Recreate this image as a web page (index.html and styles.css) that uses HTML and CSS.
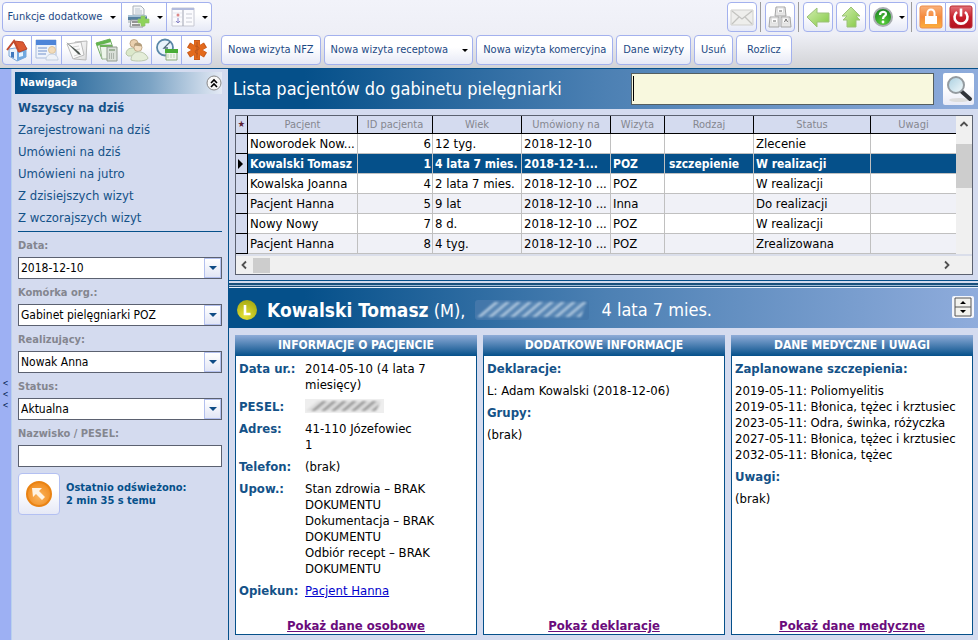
FILE: index.html
```html
<!DOCTYPE html>
<html lang="pl">
<head>
<meta charset="utf-8">
<title>Lista pacjentów do gabinetu pielęgniarki</title>
<link rel="stylesheet" href="styles.css">
</head>
<body>
<svg class="defs" width="0" height="0" aria-hidden="true">
  <defs>
    <linearGradient id="green" x1="0" y1="0" x2="1" y2="1"><stop offset="0" stop-color="#d3eeb0"/><stop offset="1" stop-color="#82c843"/></linearGradient>
    <linearGradient id="orange" x1="0" y1="0" x2="0" y2="1"><stop offset="0" stop-color="#f9b27c"/><stop offset=".5" stop-color="#f58a3c"/><stop offset="1" stop-color="#fbb03c"/></linearGradient>
    <linearGradient id="red" x1="0" y1="0" x2="0" y2="1"><stop offset="0" stop-color="#e2747a"/><stop offset=".5" stop-color="#c8202c"/><stop offset="1" stop-color="#b3121f"/></linearGradient>
    <radialGradient id="help" cx=".5" cy=".8" r=".8"><stop offset="0" stop-color="#5cd03c"/><stop offset="1" stop-color="#17801f"/></radialGradient>
    <radialGradient id="lime" cx=".4" cy=".8" r=".8"><stop offset="0" stop-color="#e6e23a"/><stop offset="1" stop-color="#a8ab12"/></radialGradient>
    <radialGradient id="amber" cx=".5" cy=".6" r=".6"><stop offset="0" stop-color="#fbb55e"/><stop offset="1" stop-color="#f08a1c"/></radialGradient>
    <linearGradient id="paper" x1="0" y1="0" x2="1" y2="1"><stop offset="0" stop-color="#fff"/><stop offset="1" stop-color="#dcdcdc"/></linearGradient>
    <linearGradient id="lens" x1="0" y1="0" x2="1" y2="1"><stop offset="0" stop-color="#a9cfe0"/><stop offset="1" stop-color="#f4fafc"/></linearGradient>
    <filter id="soft"><feGaussianBlur stdDeviation="1"/></filter>
    <pattern id="scratch-light" width="11" height="20" patternUnits="userSpaceOnUse" patternTransform="skewX(-50)">
      <rect width="4" height="20" fill="#a9c3dc"/><rect x="4" width="2" height="20" fill="#6f98c0"/><rect x="8" width="1" height="20" fill="#7fa4c8"/>
    </pattern>
    <pattern id="scratch-dark" width="10" height="20" patternUnits="userSpaceOnUse" patternTransform="skewX(-50)">
      <rect width="4" height="20" fill="#969696"/><rect x="4" width="2" height="20" fill="#cfcfcf"/><rect x="7" width="1" height="20" fill="#c2c2c2"/>
    </pattern>
  </defs>
</svg>

<header class="toolbars">
  <div class="bar">
    <div class="group">
      <button class="tool wide">Funkcje dodatkowe <i class="caret"></i></button>
      <button class="tool drop" aria-label="Drukuj">
        <svg width="24" height="24" viewBox="0 0 24 24"><path d="M7 10V1h8l3 3v6z" fill="#f4f6f8" stroke="#a8b0b8"/><path d="M9 4h5M9 6h7M9 8h7" stroke="#b9c4cf"/><path d="M2 10h18l1 2v4H2z" fill="#56809f"/><path d="M2 10h18v2H2z" fill="#a9c3d6"/><path d="M2 15h19v3H2z" fill="#c8cfd4"/><path d="M5 15h12v7H4z" fill="#f3f3f3" stroke="#8d9499"/><path d="M6 17h8M6 20h8" stroke="#777" stroke-width="1.500"/><path d="M15 11h4v3h4v4h-4v3h-4v-3h-3v-4h3z" fill="#8ed35b" stroke="#8fc46c" stroke-width=".7"/></svg>
        <i class="caret"></i></button>
      <button class="tool drop" aria-label="Widok">
        <svg width="24" height="24" viewBox="0 0 24 24"><path d="M1 3h22v18H1z" fill="#fbfbfe" stroke="#c6c8d3"/><path d="M1 3h22v2H1z" fill="#b2bbdc"/><path d="M12 5v16" stroke="#9fa3b1"/><path d="M2 8h9M2 12h9M2 17h9" stroke="#e4e5ee"/><circle cx="7" cy="10" r="1.500" fill="#d88"/><path d="M7 13v5M5 16l2 2 2-2" stroke="#8a86c8" fill="none"/><path d="M15 9h6M15 13h6M15 17h6" stroke="#c9cbd4"/></svg>
        <i class="caret"></i></button>
    </div>
    <div class="right">
      <button class="tool single" aria-label="Wiadomości"><svg width="24" height="24" viewBox="0 0 24 24"><path d="M1 5h22v15H1z" fill="#eeeeec" stroke="#d0d0cd"/><path d="M2 6l10 8L22 6M2 19l7-7M22 19l-7-7" fill="none" stroke="#c3c3c0" stroke-width="1.300"/></svg></button>
      <span class="sep"></span>
      <button class="tool single" aria-label="Skróty klawiszowe"><svg width="24" height="24" viewBox="0 0 24 24"><g fill="#e6e6e6" stroke="#a5a5a5"><path d="M8 2h9l1 9H7z"/><path d="M2 12h9v10H1z"/><path d="M13 12h9l1 10H13z"/></g><g fill="#fff" stroke="#ddd"><path d="M9.500 3h6v5h-6zM3.500 13h6v5h-6zM14.500 13h6v5h-6z"/></g><path d="M11 6h3M5 16h3M16.500 17l1.500-3 1.500 3" fill="none" stroke="#666"/></svg></button>
      <span class="sep"></span>
      <button class="tool single" aria-label="Wstecz"><svg width="24" height="24" viewBox="0 0 24 24"><path d="M1 12L11 3v5h12v9H11v5z" fill="url(#green)" stroke="#9cc17a"/></svg></button>
      <button class="tool single" aria-label="W górę"><svg width="24" height="24" viewBox="0 0 24 24"><path d="M12 2l9 9h-4l4 4h-4v7H8v-7H4l4-4H3z" fill="url(#green)" stroke="#9cc17a"/></svg></button>
      <button class="tool help" aria-label="Pomoc"><svg width="22" height="22" viewBox="0 0 22 22"><circle cx="11" cy="11" r="9" fill="url(#help)" stroke="#a9aeb1" stroke-width="2"/><path d="M8 9c0-4 6-4 6-1 0 2-3 2-3 5" fill="none" stroke="#fff" stroke-width="2.200"/><circle cx="11" cy="16" r="1.400" fill="#fff"/></svg><i class="caret"></i></button>
      <span class="sep"></span>
      <div class="group">
        <button class="tool icon" aria-label="Zablokuj"><svg width="24" height="24" viewBox="0 0 24 24"><rect x="1" y="1" width="22" height="22" rx="2" fill="url(#orange)" stroke="#ee8c4c"/><path d="M6 11h12v8H6z" fill="#fff"/><path d="M8.500 11V8a3.500 3.500 0 017 0v3" fill="none" stroke="#fff" stroke-width="2"/></svg></button>
        <button class="tool icon" aria-label="Wyjdź"><svg width="24" height="24" viewBox="0 0 24 24"><rect x="1" y="1" width="22" height="22" rx="2" fill="url(#red)" stroke="#b92a33"/><path d="M8 7a6.500 6.500 0 108 0" fill="none" stroke="#fff" stroke-width="2.600"/><path d="M12 3.500v8" stroke="#fff" stroke-width="2.600"/></svg></button>
      </div>
    </div>
  </div>
  <div class="bar">
    <div class="group">
      <button class="tool icon" aria-label="Start"><svg width="24" height="24" viewBox="0 0 24 24"><path d="M4 11l6-1 11 1v8l-9 4-8-5z" fill="#e9f2fb" stroke="#7ba5d3"/><path d="M12 13l9-2v8l-9 4z" fill="#70a8e0"/><path d="M6 14h3v6l-3-1z" fill="#3f78bd"/><path d="M14 15l4-1v4l-4 1z" fill="#e8f5ff"/><path d="M9 3l9 1 4 7-8 3z" fill="#dc5a31" stroke="#b8442a"/><path d="M2 12l7-9 5 11" fill="none" stroke="#c24a2c" stroke-width="2"/></svg></button>
      <button class="tool icon" aria-label="Terminarz"><svg width="24" height="24" viewBox="0 0 24 24"><path d="M1 2h20v18H1z" fill="#eef3fb" stroke="#a9bbdc"/><path d="M1 2h20v5H1z" fill="#4e85d8"/><path d="M3 10h9M3 13h9M3 16h8" stroke="#9bb2dc" stroke-width="1.500"/><circle cx="17" cy="12" r="3.500" fill="#f3dcba" stroke="#dcc49c"/><path d="M11 22c0-8 12-8 12 0z" fill="#eef2f8" stroke="#c3cfdf"/></svg></button>
      <button class="tool icon" aria-label="Notatki"><svg width="24" height="24" viewBox="0 0 24 24"><path d="M10 4l12-1-1 19-12-1z" fill="url(#paper)" stroke="#b9b9b9"/><path d="M2 6l14-2 3 13-11 4z" fill="#fafafa" stroke="#bbb"/><path d="M8 9l6-1M9 12l6-1M9 18l6-2" stroke="#d2d2d2"/><path d="M1 4l13 10 2 3-3-1z" fill="#4c544f"/></svg></button>
      <button class="tool icon" aria-label="Rozliczenia"><svg width="24" height="24" viewBox="0 0 24 24"><path d="M1 5l14-4 5 15-13 5z" fill="#f1f7ef" stroke="#75ae69"/><path d="M1 5l14-4 1 3L2 8z" fill="#62b54d"/><path d="M5 7h12v14H7z" fill="#edf5ea" stroke="#9bb694"/><path d="M5 7h12v2H5z" fill="#6cb457"/><path d="M12 9h10v14H12z" fill="#d9dfd8" stroke="#929b90"/><path d="M14 11h6v2h-6z" fill="#9fb29b"/><path d="M14 16h6M14 18h6M14 20h6" stroke="#808980" stroke-dasharray="1 1"/></svg></button>
      <button class="tool icon" aria-label="Pacjenci"><svg width="24" height="24" viewBox="0 0 24 24"><path d="M1 16c0-7 9-8 12-2v4H3z" fill="#dbe8ca" stroke="#b9c7aa"/><circle cx="9" cy="5.500" r="4" fill="#ead0ae" stroke="#bfa583"/><circle cx="13" cy="9.500" r="4" fill="#f3dfc3" stroke="#c2a988"/><path d="M9 8c0-5 8-4 8 0-3 1-5-1-8 0z" fill="#b39d7b"/><path d="M6 22c0-10 13-11 17-2 0 3-12 4-17 2z" fill="#e4edd9" stroke="#bac7ad"/></svg></button>
      <button class="tool icon" aria-label="Harmonogram"><svg width="24" height="24" viewBox="0 0 24 24"><circle cx="10" cy="9.500" r="8" fill="#e9f4fc" stroke="#5a87a7" stroke-width="1.800"/><path d="M15 4l-6 6h4" fill="none" stroke="#536c7c" stroke-width="1.300"/><path d="M11 12h11v10H11z" fill="#f0f5ec" stroke="#8aa97d"/><path d="M10 11h13v4H10z" fill="#48ad36"/><path d="M12 17h9M12 19h9" stroke="#bcd1b4" stroke-dasharray="2 1"/></svg></button>
      <button class="tool icon" aria-label="Pomoc medyczna"><svg width="24" height="24" viewBox="0 0 24 24"><g stroke="#c65a1c" stroke-width="6"><path d="M12 2v20M3.500 7l17 10M3.500 17l17-10"/></g><g stroke="#e36a1c" stroke-width="5"><path d="M12 3v18M4.500 7.500l15 9M4.500 16.500l15-9"/></g><path d="M12 4v16M10 8c5 0 5 4 2 4s-2 4 1 4" fill="none" stroke="#b8551c" stroke-width="1"/></svg></button>
    </div>
    <div class="actions">
      <button class="tool action">Nowa wizyta NFZ</button>
      <button class="tool action">Nowa wizyta receptowa <i class="caret"></i></button>
      <button class="tool action">Nowa wizyta komercyjna</button>
      <button class="tool action">Dane wizyty</button>
      <button class="tool action">Usuń</button>
      <button class="tool action roomy">Rozlicz</button>
    </div>
  </div>
</header>

<div class="workspace">
  <button class="collapse" aria-label="Zwiń panel"><span>&lt;</span><span>&lt;</span><span>&lt;</span></button>
  <aside class="sidebar">
    <div class="nav-head"><span>Nawigacja</span>
      <button class="chevrons" aria-label="Zwiń nawigację"><svg width="16" height="16" viewBox="0 0 16 16"><circle cx="8" cy="8" r="7" fill="#f7f7f7" stroke="#888"/><path d="M5 8l3-3 3 3M5 12l3-3 3 3" fill="none" stroke="#000" stroke-width="1.600"/></svg></button>
    </div>
    <nav class="nav">
      <a class="current" href="#">Wszyscy na dziś</a>
      <a href="#">Zarejestrowani na dziś</a>
      <a href="#">Umówieni na dziś</a>
      <a href="#">Umówieni na jutro</a>
      <a href="#">Z dzisiejszych wizyt</a>
      <a href="#">Z wczorajszych wizyt</a>
    </nav>
    <form class="filters">
      <label for="data">Data:</label>
      <div class="combo"><select id="data"><option>2018-12-10</option></select><span class="arrow"></span></div>
      <label for="komorka">Komórka org.:</label>
      <div class="combo"><select id="komorka"><option>Gabinet pielęgniarki POZ</option></select><span class="arrow"></span></div>
      <label for="realizujacy">Realizujący:</label>
      <div class="combo"><select id="realizujacy"><option>Nowak Anna</option></select><span class="arrow"></span></div>
      <label for="status">Status:</label>
      <div class="combo"><select id="status"><option>Aktualna</option></select><span class="arrow"></span></div>
      <label for="nazwisko">Nazwisko / PESEL:</label>
      <div class="combo"><input id="nazwisko" type="text"></div>
    </form>
    <div class="refresh">
      <button class="refresh-btn" aria-label="Odśwież"><svg width="28" height="28" viewBox="0 0 28 28"><circle cx="14" cy="14" r="12" fill="url(#amber)" stroke="#e98314" stroke-width="2"/><path d="M7 8h10l-3 3 6 6-3 3-6-6-3 3z" fill="#fff3e2"/></svg></button>
      <p>Ostatnio odświeżono:<br>2 min 35 s temu</p>
    </div>
  </aside>

  <main class="content">
    <section class="list">
      <div class="title-bar">
        <h1>Lista pacjentów do gabinetu pielęgniarki</h1>
        <div class="search"><input type="text" aria-label="Szukaj pacjenta"><span class="cursor"></span></div>
        <button class="search-btn" aria-label="Szukaj"><svg width="28" height="28" viewBox="0 0 28 28"><ellipse cx="14" cy="25" rx="10" ry="2" fill="#ddd"/><path d="M16 16l9 8" stroke="#30343a" stroke-width="4" stroke-linecap="round"/><circle cx="11" cy="10" r="8" fill="url(#lens)" stroke="#949ba0" stroke-width="2"/></svg></button>
      </div>
      <div class="grid">
        <div class="grid-body">
          <table>
            <colgroup><col class="c-mark"><col class="c-name"><col class="c-id"><col class="c-date"><col class="c-date"><col class="c-visit"><col class="c-date"><col class="c-status"><col></colgroup>
            <thead><tr><th class="star">★</th><th>Pacjent</th><th>ID pacjenta</th><th>Wiek</th><th>Umówiony na</th><th>Wizyta</th><th>Rodzaj</th><th>Status</th><th>Uwagi</th></tr></thead>
            <tbody>
              <tr><td></td><td>Noworodek Now...</td><td>6</td><td>12 tyg.</td><td>2018-12-10</td><td></td><td></td><td>Zlecenie</td><td></td></tr>
              <tr class="selected"><td><i class="pointer"></i></td><td>Kowalski Tomasz</td><td>1</td><td>4 lata 7 mies.</td><td>2018-12-1...</td><td>POZ</td><td>szczepienie</td><td>W realizacji</td><td></td></tr>
              <tr><td></td><td>Kowalska Joanna</td><td>4</td><td>2 lata 7 mies.</td><td>2018-12-10 ...</td><td>POZ</td><td></td><td>W realizacji</td><td></td></tr>
              <tr><td></td><td>Pacjent Hanna</td><td>5</td><td>9 lat</td><td>2018-12-10 ...</td><td>Inna</td><td></td><td>Do realizacji</td><td></td></tr>
              <tr><td></td><td>Nowy Nowy</td><td>7</td><td>8 d.</td><td>2018-12-10 ...</td><td>POZ</td><td></td><td>W realizacji</td><td></td></tr>
              <tr><td></td><td>Pacjent Hanna</td><td>8</td><td>4 tyg.</td><td>2018-12-10 ...</td><td>POZ</td><td></td><td>Zrealizowana</td><td></td></tr>
            </tbody>
          </table>
          <div class="vscroll"><svg width="16" height="16" viewBox="0 0 16 16"><path d="M4.500 10L8 6.500l3.500 3.500" fill="none" stroke="#505050" stroke-width="1.800"/></svg><span class="vthumb"></span></div>
        </div>
        <div class="hscroll">
          <svg width="16" height="16" viewBox="0 0 16 16"><path d="M10 4.500L6.500 8l3.500 3.500" fill="none" stroke="#505050" stroke-width="1.800"/></svg><span class="hthumb"></span>
          <svg class="end" width="16" height="16" viewBox="0 0 16 16"><path d="M6 4.500L9.500 8 6 11.500" fill="none" stroke="#505050" stroke-width="1.800"/></svg>
        </div>
      </div>
    </section>
    <div class="divider"></div>
    <section class="patient">
      <div class="title-bar patient-bar">
        <svg width="20" height="20" viewBox="0 0 20 20"><circle cx="10" cy="10" r="10" fill="url(#lime)"/><path d="M8 5v9h5.500" fill="none" stroke="#fff" stroke-width="2.600"/></svg>
        <h2><span><b>Kowalski Tomasz</b> (M),</span> <svg width="116" height="20" viewBox="0 0 116 20"><rect width="114" height="20" rx="3" fill="#4477aa"/><path d="M2 17L18 2h94l-6 15z" fill="url(#scratch-light)" filter="url(#soft)"/></svg> <span>4 lata 7 mies.</span></h2>
        <button class="resize" aria-label="Zmień wysokość"><svg width="18" height="20" viewBox="0 0 18 20"><path d="M1 1h16v18H1z" fill="#f2f2ee" stroke="#555"/><path d="M1 10h16" stroke="#555"/><path d="M6 7l3-3 3 3zM6 13l3 3 3-3z" fill="#000"/></svg></button>
      </div>
      <div class="cards">
        <article class="card">
          <h3>INFORMACJE O PACJENCIE</h3>
          <dl>
            <dt>Data ur.:</dt><dd>2014-05-10 (4 lata 7 miesięcy)</dd>
            <dt>PESEL:</dt><dd><svg width="79" height="14" viewBox="0 0 79 14"><rect width="79" height="14" fill="#eee"/><path d="M1 12L13 2h63l-5 10z" fill="url(#scratch-dark)" filter="url(#soft)"/></svg></dd>
            <dt>Adres:</dt><dd>41-110 Józefowiec<br>1</dd>
            <dt>Telefon:</dt><dd>(brak)</dd>
            <dt>Upow.:</dt><dd>Stan zdrowia – BRAK DOKUMENTU<br>Dokumentacja – BRAK DOKUMENTU<br>Odbiór recept – BRAK DOKUMENTU</dd>
            <dt>Opiekun:</dt><dd><a href="#">Pacjent Hanna</a></dd>
          </dl>
          <a class="more" href="#">Pokaż dane osobowe</a>
        </article>
        <article class="card">
          <h3>DODATKOWE INFORMACJE</h3>
          <div class="text"><h4>Deklaracje:</h4><p>L: Adam Kowalski (2018-12-06)</p><h4>Grupy:</h4><p>(brak)</p></div>
          <a class="more" href="#">Pokaż deklaracje</a>
        </article>
        <article class="card">
          <h3>DANE MEDYCZNE I UWAGI</h3>
          <div class="text"><h4>Zaplanowane szczepienia:</h4><p>2019-05-11: Poliomyelitis<br>2019-05-11: Błonica, tężec i krztusiec<br>2023-05-11: Odra, świnka, różyczka<br>2027-05-11: Błonica, tężec i krztusiec<br>2032-05-11: Błonica, tężec</p><h4>Uwagi:</h4><p>(brak)</p></div>
          <a class="more" href="#">Pokaż dane medyczne</a>
        </article>
      </div>
    </section>
  </main>
</div>
</body>
</html>
```
FILE: styles.css
```css
* { box-sizing: border-box; }
body {
  margin: 0;
  min-height: 100vh;
  display: flex;
  flex-direction: column;
  font: 13px/16px Tahoma, "DejaVu Sans Condensed", "DejaVu Sans", sans-serif;
  color: #000;
  background: #d4dbef;
}
button, input, select { font: inherit; color: inherit; margin: 0; padding: 0; }
h1, h2, h3, h4, p, dl, dd { margin: 0; }
svg { display: block; flex: none; }
.defs { position: absolute; }

/* Toolbars */
.toolbars {
  display: flex;
  flex-direction: column;
  gap: 3px;
  padding: 2px 2px 3px;
  background: linear-gradient(#f2f3fa, #eeeff6 50%, #d2d3d6);
}
.bar { display: flex; gap: 9px; }
.group { display: flex; }
.tool {
  display: flex;
  align-items: center;
  justify-content: center;
  height: 30px;
  border: 1px solid #a3b1ee;
  border-radius: 4px;
  background: linear-gradient(#fff 40%, #e6e9f6);
  color: #1d4a85;
  font-size: 11px;
  white-space: nowrap;
}
.group .tool { border-radius: 0; }
.group .tool + .tool { border-left: 0; }
.group .tool:first-child { border-radius: 4px 0 0 4px; }
.group .tool:last-child { border-radius: 0 4px 4px 0; }
.wide { width: 120px; gap: 8px; }
.drop { width: 45px; gap: 7px; }
.icon, .single { width: 30px; }
.help { width: 39px; gap: 5px; }
.caret {
  border: 3px solid transparent;
  border-top-color: #000;
  border-bottom: 0;
}
.right { display: flex; align-items: center; gap: 3px; margin-left: auto; }
.sep { width: 1px; height: 30px; margin-right: 1px; background: #9b9b9b; }
.actions { display: flex; gap: 3px; }
.action { padding: 0 6px; }
.action.roomy { padding: 0 10px; }
.action .caret { margin-left: 14px; margin-right: -2px; }

/* Workspace */
.workspace { flex: 1; display: flex; border-top: 1px solid #05508a; }
.collapse {
  display: flex;
  flex-direction: column;
  justify-content: center;
  align-items: center;
  width: 12px;
  border: 0;
  border-right: 1px solid #b9d0ee;
  background: #9db0f3;
  color: #001c50;
  font-size: 8px;
  line-height: 11px;
  padding-top: 80px;
}
.sidebar { width: 216px; padding: 3px 6px 0 3px; }
.nav-head {
  display: flex;
  align-items: center;
  justify-content: space-between;
  height: 22px;
  padding: 0 0 0 5px;
  background: linear-gradient(90deg, #05508a, #7ba3c4 65%, #e4eaf5);
  color: #fff;
  font-size: 11px;
  font-weight: bold;
}
.chevrons { border: 0; background: none; }
.nav {
  display: flex;
  flex-direction: column;
  margin-left: 3px;
  padding: 3px 0 2px;
  border-bottom: 1px solid #05508a;
}
.nav a { color: #145288; text-decoration: none; line-height: 22px; }
.nav .current { font-weight: bold; }
.filters { margin-left: 3px; }
.filters label {
  display: block;
  padding: 4px 0 2px;
  line-height: 19px;
  font-size: 11px;
  font-weight: bold;
  color: #84868f;
}
.combo { position: relative; height: 22px; font-size: 12px; }
.combo select, .combo input {
  appearance: none;
  display: block;
  width: 100%;
  height: 22px;
  border: 1px solid #5b6170;
  border-radius: 0;
  background: #fff;
  padding: 0 20px 0 2px;
}
.arrow {
  position: absolute;
  inset: 1px 1px 1px auto;
  width: 17px;
  display: flex;
  align-items: center;
  justify-content: center;
  border: 1px solid #b3c0ee;
  background: linear-gradient(#fff, #e2e6f5);
  pointer-events: none;
}
.arrow::before { content: ""; border: 4px solid transparent; border-top-color: #0f4c85; border-bottom: 0; }
.refresh {
  display: flex;
  align-items: center;
  gap: 6px;
  margin: 6px 0 0 3px;
  color: #05508a;
  font-size: 11px;
  font-weight: bold;
  line-height: 13px;
}
.refresh-btn {
  display: flex;
  align-items: center;
  justify-content: center;
  width: 42px;
  height: 42px;
  border: 1px solid #b3c0f2;
  border-radius: 4px;
  background: linear-gradient(#fff 40%, #e6e9f6);
}

/* Title bars */
.content { flex: 1; min-width: 0; display: flex; flex-direction: column; border-left: 1px solid #05508a; }
.title-bar {
  display: flex;
  align-items: center;
  height: 40px;
  padding: 0 4px;
  gap: 9px;
  background: linear-gradient(90deg, #05508a 10%, #4c80b3 50%, #8facdc);
  color: #fff;
}
.title-bar h1 { flex: 1; font-size: 18px; font-weight: normal; line-height: 24px; white-space: nowrap; }
.search { position: relative; width: 303px; height: 32px; }
.search input { width: 100%; height: 100%; border: 1px solid #555f60; background: #f8f8de; }
.cursor { position: absolute; left: 2px; top: 3px; width: 1px; height: 25px; background: #000; }
.search-btn {
  display: flex;
  align-items: center;
  justify-content: center;
  width: 31px;
  height: 32px;
  border: 0;
  border-radius: 2px;
  background: linear-gradient(#fff 40%, #e9ebf7);
}

/* Patient grid */
.grid { margin: 6px 5px 0 6px; border: 1px solid #5b6170; }
.grid-body { display: flex; }
table { flex: 1; width: 0; table-layout: fixed; border-collapse: separate; border-spacing: 0; }
.c-mark { width: 12px; }
.c-name { width: 110px; }
.c-id { width: 75px; }
.c-date { width: 89px; }
.c-visit { width: 54px; }
.c-status { width: 117px; }
th {
  height: 18px;
  padding: 0;
  border-right: 1px solid #000;
  border-bottom: 1px solid #000;
  background: #d4dbef;
  color: #85878f;
  font-size: 11px;
  font-weight: normal;
  line-height: 17px;
}
th:last-child { border-right: 0; }
.star { color: #5a2030; font-size: 9px; }
td {
  height: 20px;
  padding: 1px 2px 0;
  border-right: 1px solid #c0c0c0;
  border-bottom: 1px solid #c0c0c0;
  background: #fff;
  line-height: 18px;
  white-space: nowrap;
}
tbody tr:nth-child(even) td { background: #f0f1f7; }
td:nth-child(3) { text-align: right; padding-right: 1px; }
td:last-child { border-right: 0; }
tbody tr.selected td {
  background: #05508a;
  color: #fff;
  font-size: 12px;
  font-weight: bold;
}
.selected td:nth-child(7) { padding-left: 4px; }
tbody tr td:first-child, tbody tr.selected td:first-child { background: #d4dbef; border-color: #000; }
.pointer { display: block; width: 0; border: 5px solid transparent; border-left-color: #000; border-right: 0; }
.vscroll { width: 16px; background: #f0f0f0; }
.vthumb { display: block; height: 44px; margin-top: 12px; background: #cdcdcd; }
.hscroll { display: flex; align-items: center; height: 20px; background: #f0f0f0; border-top: 2px solid #dadeea; }
.hthumb { width: 17px; height: 15px; margin-left: 1px; background: #cdcdcd; }
.end { margin-left: auto; margin-right: 17px; }

.divider {
  height: 8px;
  margin-top: 5px;
  background: linear-gradient(#05508a 0 1px, #d4dbef 1px 3px, #18507c 3px 5px, #a7bdd6 5px 6px, #18507c 6px 7px, #e8eefa 7px);
}

/* Patient details */
.patient { flex: 1; display: flex; flex-direction: column; }
.patient-bar { padding: 4px 4px 0 8px; gap: 10px; }
.patient-bar h2 { display: flex; align-items: center; gap: 10px; flex: 1; font-size: 18px; font-weight: normal; line-height: 24px; white-space: nowrap; }
.patient-bar b { font-size: 19px; }
.resize { align-self: flex-start; margin-top: 4px; padding: 1px 2px; border: 0; border-radius: 2px; background: #f4f6fc; }
.cards { flex: 1; display: grid; grid-template-columns: repeat(3, 1fr); gap: 6px; padding: 7px 5px 5px 6px; }
.card { display: flex; flex-direction: column; border: 1px solid #05508a; border-top: 0; background: #fff; }
.card h3 {
  margin: 0 -1px;
  background: linear-gradient(#8facd8, #05508a);
  color: #fff;
  font-size: 12px;
  line-height: 21px;
  text-align: center;
}
dl { display: grid; grid-template-columns: 60px 134px; gap: 6px; padding: 5px 3px; }
dt, h4 { color: #145288; font-size: 13px; font-weight: bold; white-space: nowrap; }
dd a { color: #00c; }
.text { display: flex; flex-direction: column; gap: 6px; padding: 5px 3px; white-space: nowrap; }
.more { margin-top: auto; color: #6b0c7c; font-weight: bold; text-align: center; }
```
